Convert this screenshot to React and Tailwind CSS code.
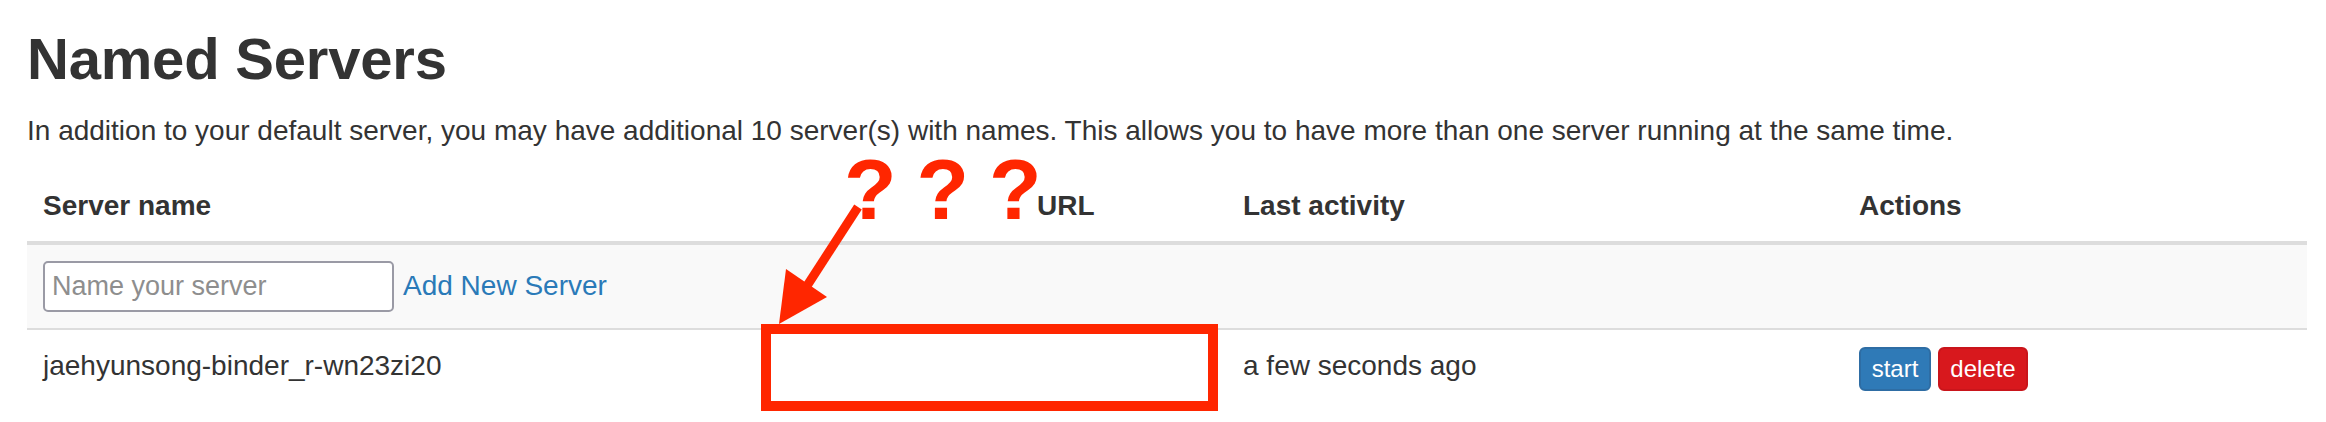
import React from "react";

const servers = [
  { name: "jaehyunsong-binder_r-wn23zi20", activity: "a few seconds ago" },
];

const Annotation = () => (
  <>
    {/* red question marks next to the URL header */}
    <div className="pointer-events-none absolute left-[844px] top-[146px] flex gap-[20px] text-[86px] font-bold leading-none text-[#ff2600]">
      <span>?</span>
      <span>?</span>
      <span>?</span>
    </div>
    <svg
      className="pointer-events-none absolute left-0 top-0"
      width="2326"
      height="422"
      viewBox="0 0 2326 422"
    >
      <line x1="858" y1="207" x2="803" y2="292" stroke="#ff2600" strokeWidth="9" />
      <polygon points="779,324 786,269 827,297" fill="#ff2600" />
    </svg>
    <div className="pointer-events-none absolute left-[761px] top-[324px] h-[87px] w-[457px] border-[10px] border-[#ff2600]" />
  </>
);

export default function App() {
  return (
    <div className="relative min-h-[422px] w-[2326px] overflow-hidden bg-white px-[27px] font-['Liberation_Sans',Arial,sans-serif] text-[#333]">
      <h1 className="pt-[27px] text-[58px] font-bold leading-[1.1] tracking-[-0.2px]">
        Named Servers
      </h1>
      <p className="mt-[20px] text-[28px] leading-[40px]">
        In addition to your default server, you may have additional 10
        server(s) with names. This allows you to have more than one server
        running at the same time.
      </p>

      <table className="mt-[19px] w-[2280px] table-fixed border-collapse text-[28px] leading-[40px]">
        <colgroup>
          <col className="w-[994px]" />
          <col className="w-[206px]" />
          <col className="w-[616px]" />
          <col className="w-[464px]" />
        </colgroup>
        <thead>
          <tr className="border-b-4 border-[#ddd] text-left">
            <th className="px-[16px] pb-[15px] pt-[16px] font-bold">Server name</th>
            <th className="px-[16px] pb-[15px] pt-[16px] font-bold">URL</th>
            <th className="px-[16px] pb-[15px] pt-[16px] font-bold">Last activity</th>
            <th className="px-[16px] pb-[15px] pt-[16px] font-bold">Actions</th>
          </tr>
        </thead>
        <tbody>
          <tr className="bg-[#f9f9f9]">
            <td className="px-[16px] py-[16px]">
              <div className="flex items-center">
                <input
                  type="text"
                  placeholder="Name your server"
                  className="h-[51px] w-[351px] rounded-[5px] border-2 border-[#9a9aa5] bg-white pl-[7px] text-[27px] text-[#333] outline-none placeholder:text-[#8e8e8e]"
                />
                <a href="#" className="ml-[9px] text-[#2a7ab8]">
                  Add New Server
                </a>
              </div>
            </td>
            <td />
            <td />
            <td />
          </tr>
          {servers.map((s) => (
            <tr key={s.name} className="border-t-2 border-[#ddd]">
              <td className="px-[16px] pb-[16px] pt-[16px] align-top">{s.name}</td>
              <td className="px-[16px] py-[16px]" />
              <td className="px-[16px] pb-[16px] pt-[16px] align-top">{s.activity}</td>
              <td className="px-[16px] pb-[16px] pt-[17px] align-top">
                <div className="flex gap-[7px]">
                  <button
                    type="button"
                    className="h-[44px] w-[72px] rounded-[6px] border-2 border-[#2e6da4] bg-[#2f7ab7] text-[24px] leading-none text-white"
                  >
                    start
                  </button>
                  <button
                    type="button"
                    className="h-[44px] w-[90px] rounded-[6px] border-2 border-[#c9151b] bg-[#d8181d] text-[24px] leading-none text-white"
                  >
                    delete
                  </button>
                </div>
              </td>
            </tr>
          ))}
        </tbody>
      </table>

      <Annotation />
    </div>
  );
}
